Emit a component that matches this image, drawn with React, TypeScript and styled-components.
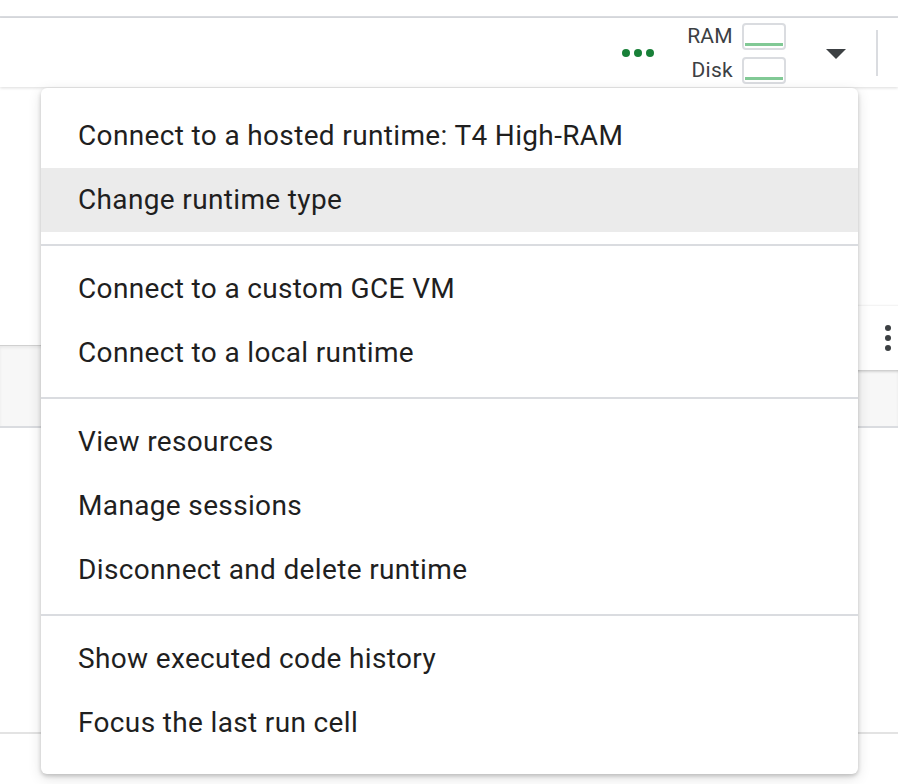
import React from "react";
import styled, { createGlobalStyle } from "styled-components";

const Global = createGlobalStyle`
  html, body { margin: 0; padding: 0; background: #ffffff; }
  body { font-family: Roboto, "Liberation Sans", sans-serif; }
`;

const Page = styled.div`
  position: relative;
  width: 898px;
  height: 784px;
  overflow: hidden;
  background: #ffffff;
  display: flex;
  flex-direction: column;
`;

const TopStrip = styled.div`
  height: 16px;
  border-bottom: 2px solid #dadce0;
  flex: none;
`;

const Toolbar = styled.div`
  height: 69px;
  flex: none;
  display: flex;
  align-items: center;
  justify-content: flex-end;
  background: #ffffff;
  box-shadow: 0 1px 3px rgba(0, 0, 0, 0.14);
  position: relative;
  z-index: 1;
`;

const Dots = styled.div`
  display: flex;
  gap: 4px;
  margin-right: 33px;
  margin-top: 1px;
`;

const Dot = styled.span`
  width: 8px;
  height: 8px;
  border-radius: 50%;
  background: #188038;
`;

const Meters = styled.div`
  display: grid;
  grid-template-columns: auto auto;
  column-gap: 9px;
  row-gap: 7px;
  align-items: center;
  justify-items: end;
  margin-top: 1px;
`;

const MeterLabel = styled.span`
  font-size: 21px;
  letter-spacing: 0.3px;
  color: #3c4043;
  line-height: 25px;
`;

const MeterBox = styled.div`
  width: 38px;
  height: 21px;
  border: 2px solid #dadce0;
  border-radius: 4px;
  display: flex;
  align-items: flex-end;
  padding: 0 1px 2px;
`;

const MeterFill = styled.div`
  flex: 1;
  height: 3px;
  background: #81c995;
`;

const Caret = styled.div`
  width: 0;
  height: 0;
  border-left: 10px solid transparent;
  border-right: 10px solid transparent;
  border-top: 10px solid #3c4043;
  margin-left: 40px;
  margin-right: 30px;
  margin-top: 2px;
`;

const VDivider = styled.div`
  width: 2px;
  height: 46px;
  background: #dadce0;
  margin-right: 20px;
`;

const Body = styled.div`
  flex: 1;
  display: flex;
  flex-direction: column;
`;

const Spacer = styled.div<{ $h: number }>`
  height: ${(p) => p.$h}px;
  flex: none;
`;

const Cell = styled.div`
  height: 80px;
  flex: none;
  background: #f7f7f7;
  border-top: 1px solid #d0d0d0;
  border-bottom: 2px solid #dadce0;
  box-shadow: inset 0 2px 3px rgba(0, 0, 0, 0.06);
`;

const Rule = styled.div`
  height: 2px;
  flex: none;
  background: #e3e3e3;
`;

const CellToolbar = styled.div`
  position: absolute;
  left: 800px;
  top: 306px;
  width: 120px;
  height: 64px;
  background: #ffffff;
  box-shadow: 0 1px 3px rgba(0, 0, 0, 0.25);
  display: flex;
  align-items: center;
  justify-content: flex-end;
  padding-right: 29px;
  box-sizing: border-box;
`;

const Kebab = styled.div`
  display: flex;
  flex-direction: column;
  gap: 4px;
`;

const KDot = styled.span`
  width: 6px;
  height: 6px;
  border-radius: 50%;
  background: #3c4043;
`;

const Menu = styled.div`
  position: absolute;
  left: 41px;
  top: 88px;
  width: 817px;
  height: 686px;
  background: #ffffff;
  border-radius: 6px;
  box-shadow: 0 2px 4px rgba(0, 0, 0, 0.2), 0 4px 14px rgba(0, 0, 0, 0.12);
  padding: 16px 0;
  box-sizing: border-box;
  z-index: 5;
  display: flex;
  flex-direction: column;
`;

const Item = styled.div<{ $active?: boolean }>`
  height: 64px;
  flex: none;
  display: flex;
  align-items: center;
  padding-left: 37px;
  padding-bottom: 1px;
  box-sizing: border-box;
  font-size: 28px;
  letter-spacing: 0.35px;
  color: #1f1f1f;
  background: ${(p) => (p.$active ? "#ebebeb" : "transparent")};
  white-space: nowrap;
`;

const Separator = styled.div`
  height: 2px;
  flex: none;
  background: #dadce0;
  margin: 12px 0 11px;
`;

const groups: string[][] = [
  ["Connect to a hosted runtime: T4 High-RAM", "Change runtime type"],
  ["Connect to a custom GCE VM", "Connect to a local runtime"],
  ["View resources", "Manage sessions", "Disconnect and delete runtime"],
  ["Show executed code history", "Focus the last run cell"],
];

export default function App() {
  return (
    <Page>
      <Global />
      <TopStrip />
      <Toolbar>
        <Dots>
          <Dot />
          <Dot />
          <Dot />
        </Dots>
        <Meters>
          <MeterLabel>RAM</MeterLabel>
          <MeterBox>
            <MeterFill />
          </MeterBox>
          <MeterLabel>Disk</MeterLabel>
          <MeterBox>
            <MeterFill />
          </MeterBox>
        </Meters>
        <Caret />
        <VDivider />
      </Toolbar>
      <Body>
        <Spacer $h={258} />
        <Cell />
        <Spacer $h={304} />
        <Rule />
      </Body>
      <CellToolbar>
        <Kebab>
          <KDot />
          <KDot />
          <KDot />
        </Kebab>
      </CellToolbar>
      <Menu>
        {groups.map((g, gi) => (
          <React.Fragment key={gi}>
            {gi > 0 && <Separator />}
            {g.map((t) => (
              <Item key={t} $active={t === "Change runtime type"}>
                {t}
              </Item>
            ))}
          </React.Fragment>
        ))}
      </Menu>
    </Page>
  );
}
